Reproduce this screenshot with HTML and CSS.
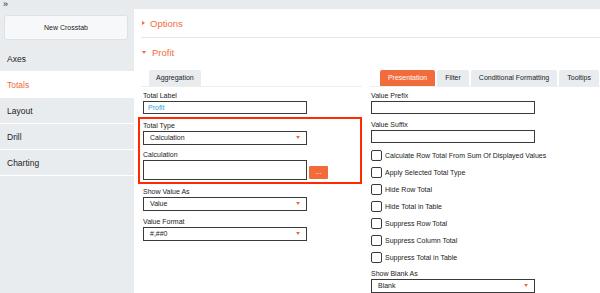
FILE: index.html
```html
<!DOCTYPE html>
<html>
  <head>
    <meta charset="utf-8" />
    <title>Crosstab Properties</title>
    <link rel="stylesheet" href="styles.css">
  </head>
  <body>
    <div class="topbar">&raquo;</div>

    <div class="app">
      <div class="sidebar">
        <div class="new-btn">New Crosstab</div>
        <div class="nav">
          <div class="nav-item">Axes</div>
          <div class="nav-item active">Totals</div>
          <div class="nav-item">Layout</div>
          <div class="nav-item">Drill</div>
          <div class="nav-item">Charting</div>
        </div>
      </div>

      <div class="main">
        <div class="section-head closed"><span class="tri-right"></span>Options</div>
        <div class="section-head"><span class="tri-down"></span>Profit</div>

        <div class="panels">
          <div class="panel left">
            <div class="tabbar">
              <div class="tab">Aggregation</div>
            </div>

            <div class="form">
              <div class="field first">
                <label>Total Label</label>
                <div class="input text-blue">Profit</div>
              </div>

              <div class="highlight">
                <div class="field">
                  <label>Total Type</label>
                  <div class="select">Calculation<span class="caret"></span></div>
                </div>
                <div class="field">
                  <label>Calculation</label>
                  <div class="calc-row">
                    <div class="textarea"></div>
                    <div class="dots-btn">...</div>
                  </div>
                </div>
              </div>

              <div class="field after-box">
                <label>Show Value As</label>
                <div class="select">Value<span class="caret"></span></div>
              </div>
              <div class="field">
                <label>Value Format</label>
                <div class="select">#,##0<span class="caret"></span></div>
              </div>
            </div>
          </div>

          <div class="panel right">
            <div class="tabbar end">
              <div class="tab active">Presentation</div>
              <div class="tab">Filter</div>
              <div class="tab">Conditional Formatting</div>
              <div class="tab">Tooltips</div>
            </div>

            <div class="form">
              <div class="field first">
                <label>Value Prefix</label>
                <div class="input"></div>
              </div>
              <div class="field">
                <label>Value Suffix</label>
                <div class="input"></div>
              </div>

              <div class="checks">
                <div class="check"><span class="box"></span>Calculate Row Total From Sum Of Displayed Values</div>
                <div class="check"><span class="box"></span>Apply Selected Total Type</div>
                <div class="check"><span class="box"></span>Hide Row Total</div>
                <div class="check"><span class="box"></span>Hide Total in Table</div>
                <div class="check"><span class="box"></span>Suppress Row Total</div>
                <div class="check"><span class="box"></span>Suppress Column Total</div>
                <div class="check"><span class="box"></span>Suppress Total in Table</div>
              </div>

              <div class="field blank">
                <label>Show Blank As</label>
                <div class="select">Blank<span class="caret"></span></div>
              </div>
            </div>
          </div>
        </div>
      </div>
    </div>
  </body>
</html>
```

FILE: styles.css
```css
html, body {
  height: 100%;
  margin: 0;
}
body {
  background-color: white;
  color: #222;
  font-family: "Liberation Sans", Arial, sans-serif;
  font-size: 7px;
  overflow: hidden;
}
.topbar {
  background-color: #e8ebee;
  font-size: 9px;
  height: 9px;
  line-height: 8px;
  padding-left: 3px;
}
.app {
  display: flex;
  height: 284px;
}
.sidebar {
  background-color: #e9ecef;
  padding-top: 6px;
  width: 134px;
}
.new-btn {
  background-color: #f7f8f9;
  border: 1px solid #dfe2e5;
  border-radius: 3px;
  height: 23px;
  line-height: 23px;
  margin: 0 6px 6px 4px;
  text-align: center;
}
.nav-item {
  border-bottom: 1px solid white;
  font-size: 8.5px;
  height: 25px;
  line-height: 26px;
  padding-left: 7px;
}
.nav-item.active {
  background-color: white;
  color: #f26b3a;
}
.main {
  flex-grow: 1;
  padding-left: 7px;
}
.section-head {
  align-items: center;
  color: #f26b3a;
  display: flex;
  font-size: 9.5px;
  height: 28px;
  padding-left: 1px;
}
.section-head.closed {
  border-bottom: 1px solid #e6e6e6;
}
.tri-right {
  border-bottom: 2px solid transparent;
  border-left: 3px solid #f26b3a;
  border-top: 2px solid transparent;
  margin-right: 5px;
}
.tri-down {
  border-left: 2px solid transparent;
  border-right: 2px solid transparent;
  border-top: 3px solid #f26b3a;
  margin-right: 6px;
}
.panels {
  display: flex;
  gap: 8px;
  margin-top: 4px;
}
.panel.left {
  width: 221px;
}
.panel.right {
  flex-grow: 1;
}
.tabbar {
  border-bottom: 1px solid #eceef0;
  display: flex;
  gap: 2px;
  padding-left: 8px;
}
.tabbar.end {
  justify-content: flex-end;
  padding-left: 0;
  padding-right: 1px;
}
.tab {
  background-color: #e9ecef;
  border-radius: 2px 2px 0 0;
  height: 16px;
  line-height: 16px;
  padding: 0 7px;
}
.tabbar.end .tab {
  padding: 0 8px;
}
.tabbar.end .tab.active {
  background-color: #f26b3a;
  color: white;
}
.form {
  padding-left: 2px;
}
.right .form {
  padding-left: 1px;
}
.field {
  margin-top: 6px;
}
.field.first {
  margin-top: 4px;
}
label {
  display: block;
  height: 9px;
  line-height: 9px;
  margin-bottom: 1px;
}
.input, .select, .textarea {
  border: 1px solid #3a3a3a;
  box-sizing: border-box;
  width: 164px;
}
.input {
  height: 13px;
  line-height: 11px;
  padding-left: 4px;
}
.text-blue {
  color: #1aa7e0;
}
.select {
  height: 14px;
  line-height: 12px;
  padding-left: 6px;
  position: relative;
}
.caret {
  border-left: 2.5px solid transparent;
  border-right: 2.5px solid transparent;
  border-top: 3px solid #f26b3a;
  position: absolute;
  right: 6px;
  top: 4px;
}
.highlight {
  border: 2px solid #ff2a00;
  margin: 3px 0 0 -5px;
  padding: 0 2px 2px 3px;
}
.highlight .field:first-child {
  margin-top: 2px;
}
.highlight .field {
  margin-top: 5px;
}
.calc-row {
  align-items: flex-end;
  display: flex;
  gap: 2px;
}
.textarea {
  height: 20px;
}
.dots-btn {
  background-color: #f26b3a;
  border-radius: 1px;
  color: white;
  height: 13px;
  line-height: 11px;
  margin-bottom: 1px;
  text-align: center;
  width: 19px;
}
.field.after-box {
  margin-top: 3px;
}
.checks {
  margin-top: 7px;
}
.check {
  align-items: center;
  display: flex;
  height: 11px;
  margin-bottom: 6px;
}
.box {
  border: 1px solid #3a3a3a;
  border-radius: 2px;
  box-sizing: border-box;
  height: 11px;
  margin-right: 3px;
  width: 11px;
}
.field.blank {
  margin-top: 0;
}
```
